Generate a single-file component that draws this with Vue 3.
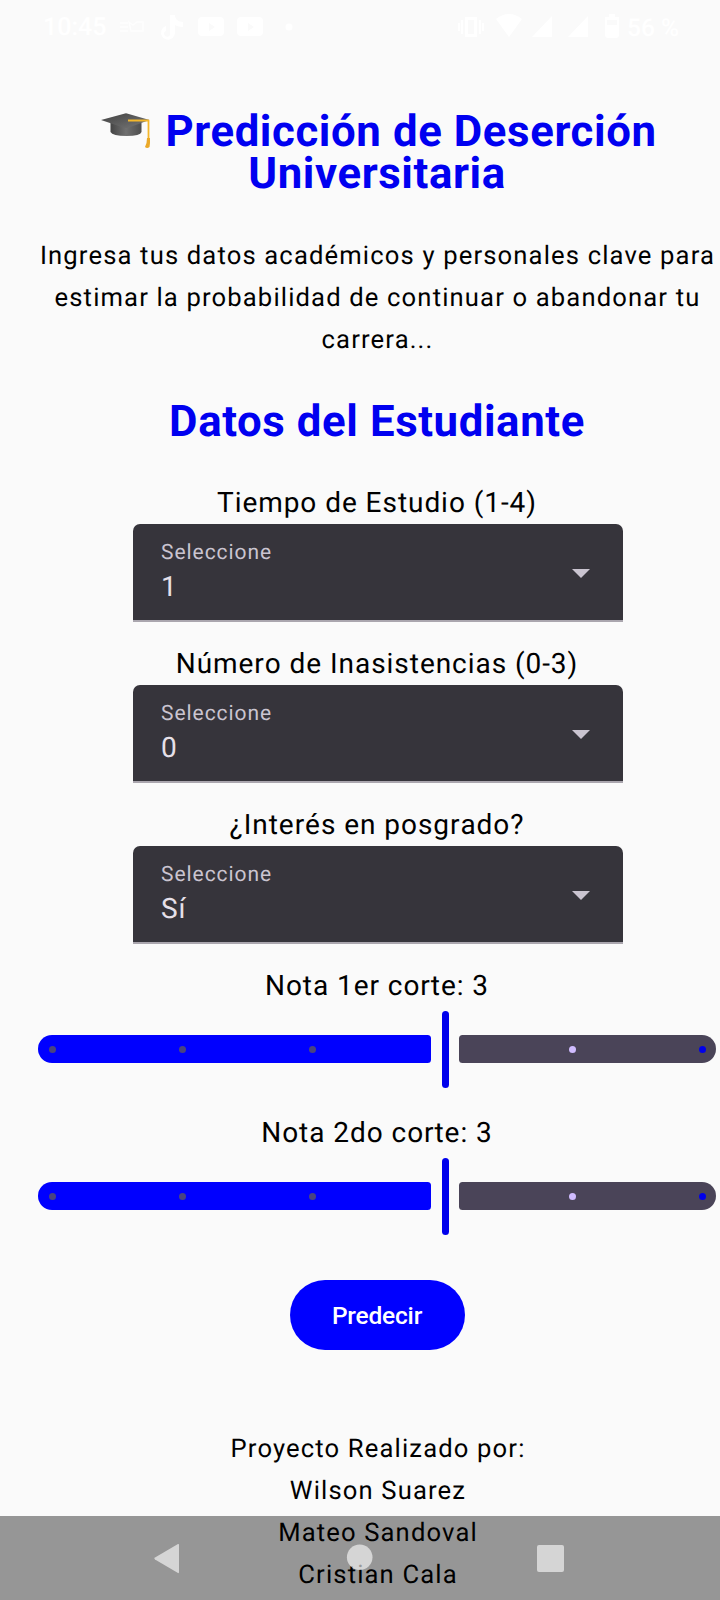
<script setup>
const selects = [
  { label: 'Tiempo de Estudio (1-4)', value: '1' },
  { label: 'Número de Inasistencias (0-3)', value: '0' },
  { label: '¿Interés en posgrado?', value: 'Sí' }
]
const sliders = ['Nota 1er corte: 3', 'Nota 2do corte: 3']
const ticks = ['on', 'on', 'on', 'hidden', 'off', 'end']
</script>

<template>
  <div class="screen">
    <header class="status">
      <span class="clock">10:45</span>
      <svg class="notif" width="177" height="32" viewBox="120 12 177 32" fill="#fff">
        <path d="M120 23h8M120 27h8M120 31h8M129 22l4 3 4-3h6v9h-12z" fill="none" stroke="#fff" stroke-width="1.5" opacity=".7" />
        <path d="M170 15h5c0 4 3 7 8 7v5c-3 0-6-1-8-2v8a7 7 0 1 1-9-7v5a3 3 0 1 0 4 2z" />
        <path fill-rule="evenodd" d="M202 17h18q4 0 4 4v11q0 4-4 4h-18q-4 0-4-4V21q0-4 4-4zM209 23v8l6-4z" />
        <path fill-rule="evenodd" d="M241 17h18q4 0 4 4v11q0 4-4 4h-18q-4 0-4-4V21q0-4 4-4zM248 23v8l6-4z" />
        <circle cx="289" cy="27" r="3.5" />
      </svg>
      <svg class="system" width="162" height="32" viewBox="458 12 162 32" fill="#fff">
        <path fill-rule="evenodd" d="M465 17h12v20h-12zM468 20v14h6V20zM461 20h2v14h-2zM458 23h2v8h-2zM479 20h2v14h-2zM482 23h2v8h-2z" />
        <path d="M496 19q13-10 26 0l-13 18zM532 37l20-21v21zM568 37l20-21v21z" />
        <path fill-rule="evenodd" d="M609 14h6v3h4v18q0 3-3 3h-8q-3 0-3-3V17h4zM607 20v5h10v-5z" />
      </svg>
      <span class="battery">56 %</span>
    </header>

    <main class="content">
      <h1 class="title">
        <svg class="cap" width="50" height="37" viewBox="0 0 50 37">
          <defs>
            <linearGradient id="board" x1="0" y1="0" x2="1" y2="1">
              <stop offset="0" stop-color="#414141" />
              <stop offset="1" stop-color="#777" />
            </linearGradient>
            <linearGradient id="base" x1="0" y1="0" x2="1" y2="0">
              <stop offset="0" stop-color="#444" />
              <stop offset=".5" stop-color="#707070" />
              <stop offset="1" stop-color="#4d4d4d" />
            </linearGradient>
          </defs>
          <path d="M9.5 10v9q2 4 16 4t15-4V10z" fill="url(#base)" />
          <path d="M0 7 24 .5Q25 .2 26 .5L48.500 7 27 14.700Q25 15.300 23 14.700z" fill="url(#board)" />
          <path d="M27 7.500h20.500V27" fill="none" stroke="#f4b72b" stroke-width="1.800" stroke-linejoin="round" />
          <path d="M46 25h3v5l-.5 4q-2.500 2-4.500 0l1.500-4z" fill="#eba928" />
        </svg>
        <span>Predicción de Deserción</span><br />Universitaria
      </h1>
      <p class="intro">Ingresa tus datos académicos y personales clave para<br />estimar la probabilidad de continuar o abandonar tu<br />carrera...</p>
      <h2 class="subtitle">Datos del Estudiante</h2>

      <section v-for="s in selects" :key="s.label" class="field">
        <div class="label">{{ s.label }}</div>
        <div class="select">
          <div class="select-text">
            <span class="hint">Seleccione</span>
            <span class="value">{{ s.value }}</span>
          </div>
          <svg class="arrow" width="18" height="9" viewBox="0 0 18 9"><path d="M0 0h18L9 9z" fill="#cac4d0" /></svg>
        </div>
      </section>

      <section v-for="label in sliders" :key="label" class="grade">
        <div class="label">{{ label }}</div>
        <div class="slider">
          <div class="track active"></div>
          <div class="handle"></div>
          <div class="track rest"></div>
          <div class="ticks"><i v-for="(t, i) in ticks" :key="i" :class="t"></i></div>
        </div>
      </section>

      <button class="predict">Predecir</button>

      <footer class="credits">Proyecto Realizado por:<br />Wilson Suarez<br />Mateo Sandoval<br />Cristian Cala</footer>
    </main>

    <nav class="navbar">
      <svg width="720" height="84" viewBox="0 0 720 84" fill="#fff" fill-opacity=".6">
        <path d="M178 28q1-.5 1 1v27q0 1.500-1 1L155 43.500q-1.500-1 0-2z" />
        <circle cx="359.700" cy="41.300" r="12.800" />
        <rect x="537" y="29" width="27" height="27" rx="2" />
      </svg>
    </nav>
  </div>
</template>

<style>
body {
  margin: 0;
  background: #fafafa;
}
</style>

<style scoped>
.screen {
  position: relative;
  width: 720px;
  height: 1600px;
  overflow: hidden;
  background: #fafafa;
  color: #000;
  font-family: Roboto, sans-serif;
  text-rendering: geometricPrecision;
}
.status {
  display: flex;
  box-sizing: border-box;
  height: 56px;
  padding: 12px 0 0 43px;
  color: #fff;
  font-size: 25px;
  font-weight: 500;
  line-height: 32px;
  white-space: nowrap;
}
.clock { width: 77px; }
.notif { margin-right: 161px; }
.system { margin-right: 7px; }
.battery { font-size: 24.5px; }
.content {
  display: flex;
  flex-direction: column;
  align-items: center;
  width: 678px;
  padding: 54px 0 0 38px;
  text-align: center;
  white-space: nowrap;
}
.title,
.subtitle {
  margin: 0;
  color: #0000f0;
  font-size: 43.75px;
  font-weight: 700;
  line-height: 42px;
  letter-spacing: 0.6px;
}
.cap {
  height: 37px;
  margin: 0 14px -4px 4px;
  vertical-align: baseline;
}
.title { height: 84px; }
.intro {
  height: 126px;
  margin: 41px 0 39px 1px;
  font-size: 25.6px;
  line-height: 42px;
  letter-spacing: 1.15px;
}
.subtitle { margin-bottom: 40px; }
.label {
  height: 42px;
  font-size: 28px;
  line-height: 42px;
  letter-spacing: 0.95px;
  font-kerning: none;
}
.field { margin-bottom: 21px; }
.select {
  display: flex;
  align-items: center;
  justify-content: space-between;
  box-sizing: border-box;
  width: 490px;
  height: 98px;
  margin-left: 2px;
  padding: 2px 33px 0 28px;
  border-bottom: 2px solid #aaa6ae;
  border-radius: 7px 7px 0 0;
  background: #36343b;
  text-align: left;
}
.field {
  display: flex;
  flex-direction: column;
  align-items: center;
}
.select-text {
  display: flex;
  flex-direction: column;
}
.hint {
  height: 27px;
  padding-top: 1px;
  color: #cac4d0;
  font-size: 21px;
  line-height: 28px;
  letter-spacing: 0.95px;
}
.value {
  color: #e6e0e9;
  font-size: 28px;
  line-height: 42px;
  letter-spacing: 0.875px;
}
.grade {
  width: 678px;
  margin-bottom: 24px;
}
.slider {
  position: relative;
  display: flex;
  align-items: center;
  height: 77px;
  margin-top: 4px;
}
.track {
  height: 28px;
  margin-bottom: 1px;
}
.active {
  width: 393px;
  border-radius: 14px 3.5px 3.5px 14px;
  background: #00f;
}
.handle {
  width: 7px;
  height: 77px;
  margin: 0 10px 0 11px;
  border-radius: 4px;
  background: #0000ec;
}
.rest {
  flex: 1;
  border-radius: 3.5px 14px 14px 3.5px;
  background: #4a4458;
}
.ticks {
  position: absolute;
  inset: 0 10px 1px 10.5px;
  display: flex;
  align-items: center;
  justify-content: space-between;
}
.ticks i {
  width: 7px;
  height: 7px;
  border-radius: 50%;
}
.on { background: #4a4480; }
.off { background: #d0bcff; }
.end { background: #0000ea; }
.hidden { visibility: hidden; }
.predict {
  width: 175px;
  height: 70px;
  margin-top: 21px;
  padding: 0;
  border: 0;
  border-radius: 35px;
  background: #00f;
  color: #fff;
  font: 500 24.5px/35px Roboto, sans-serif;
  letter-spacing: -0.2px;
}
.credits {
  margin: 78px 0 0 2px;
  font-size: 25.6px;
  line-height: 42px;
  letter-spacing: 1.15px;
}
.navbar {
  position: absolute;
  left: 0;
  bottom: 0;
  width: 720px;
  height: 84px;
  background: rgba(0, 0, 0, 0.4);
}
</style>
